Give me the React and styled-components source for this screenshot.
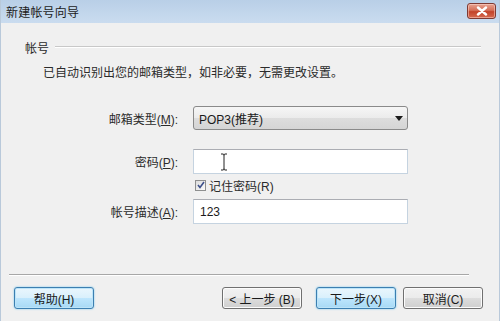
import React from 'react';
import styled, { createGlobalStyle } from 'styled-components';

const GlobalStyle = createGlobalStyle`
  html, body {
    margin: 0;
    padding: 0;
    background: #f0f0f0;
  }
  body {
    font-family: "Liberation Sans", "Noto Sans CJK SC", sans-serif;
    font-size: 12px;
    color: #2b2b2b;
  }
`;

function Wizard() {
  return (
    <Window>
      <TitleBar>
        <Title>新建帐号向导</Title>
        <CloseButton title='关闭'>
          <svg width='12' height='10' viewBox='0 0 12 10'>
            <path d='M2 1.5 L10 8.5 M10 1.5 L2 8.5' stroke='#fff' strokeWidth='2.4' strokeLinecap='round' />
          </svg>
        </CloseButton>
      </TitleBar>

      <Body>
        <GroupHeader>
          <span>帐号</span>
          <GroupLine />
        </GroupHeader>

        <Hint>已自动识别出您的邮箱类型，如非必要，无需更改设置。</Hint>

        <Form>
          <Label>邮箱类型(<u>M</u>):</Label>
          <Select>
            <span>POP3(推荐)</span>
            <svg width='8' height='5' viewBox='0 0 8 5'>
              <path d='M0 0 H8 L4 5 Z' fill='#1a1a1a' />
            </svg>
          </Select>

          <Label $top={19}>密码(<u>P</u>):</Label>
          <TextBox $top={19} $height={25}>
            <Cursor width='8' height='18' viewBox='0 0 8 18'>
              <path d='M1 1 H3 Q4 1 4 2.5 V15.5 Q4 17 3 17 H1 M7 1 H5 Q4 1 4 2.5 M4 15.5 Q4 17 5 17 H7' stroke='#222' strokeWidth='1' fill='none' />
            </Cursor>
          </TextBox>

          <CheckRow>
            <CheckBox>
              <svg width='8' height='8' viewBox='0 0 8 8'>
                <path d='M1 4 L3 6.5 L7 1' stroke='#3c4f8a' strokeWidth='1.6' fill='none' />
              </svg>
            </CheckBox>
            <span>记住密码(R)</span>
          </CheckRow>

          <Label $top={8}>帐号描述(<u>A</u>):</Label>
          <TextBox $top={8} $height={25}>123</TextBox>
        </Form>

        <Separator />

        <ButtonBar>
          <Button $focused>帮助(H)</Button>
          <Spacer />
          <Button>&lt; 上一步 (B)</Button>
          <Button $focused $gap={14}>下一步(X)</Button>
          <Button $gap={7}>取消(C)</Button>
        </ButtonBar>
      </Body>
    </Window>
  );
}

const Window = styled.div`
  width: 500px;
  height: 321px;
  box-sizing: border-box;
  display: flex;
  flex-direction: column;
  background: #f0f0f0;
  border-left: 1px solid #b9c9da;
  border-right: 1px solid #b9c9da;
  overflow: hidden;
`;

const TitleBar = styled.div`
  height: 23px;
  flex-shrink: 0;
  display: flex;
  align-items: center;
  padding: 0 3px 0 5px;
  background: linear-gradient(to bottom, #b9cfe7 0%, #c3d7ec 60%, #cadcef 100%);
`;

const Title = styled.div`
  flex: 1;
  font-size: 12px;
  color: #1c1c1c;
  letter-spacing: 0.2px;
`;

const CloseButton = styled.div`
  width: 29px;
  height: 16px;
  margin-top: -2px;
  display: flex;
  align-items: center;
  justify-content: center;
  border: 1px solid #7e3a33;
  border-radius: 3px;
  box-sizing: border-box;
  background: linear-gradient(to bottom, #e8a493 0%, #d46f58 45%, #c2432a 55%, #d66a4f 100%);
  box-shadow: inset 0 0 0 1px rgba(255, 220, 210, 0.5);
`;

const Body = styled.div`
  flex: 1;
  display: flex;
  flex-direction: column;
  padding-top: 17px;
`;

const GroupHeader = styled.div`
  display: flex;
  align-items: center;
  height: 14px;
  padding: 0 18px 0 24px;
  color: #2b2b2b;
`;

const GroupLine = styled.div`
  flex: 1;
  margin-left: 6px;
  border-top: 1px solid #c8c8c8;
  border-bottom: 1px solid #ffffff;
`;

const Hint = styled.div`
  margin: 12px 0 0 42px;
  line-height: 14px;
`;

const Form = styled.div`
  margin-top: 26px;
  display: grid;
  grid-template-columns: 177px 215px;
  column-gap: 15px;
  align-items: center;
`;

const Label = styled.div`
  text-align: right;
  margin-top: ${(p) => p.$top || 0}px;
  color: #2b2b2b;

  u {
    text-decoration: underline;
  }
`;

const Select = styled.div`
  height: 24px;
  box-sizing: border-box;
  display: flex;
  align-items: center;
  justify-content: space-between;
  padding: 0 4px 0 5px;
  border: 1px solid #8a8a8a;
  border-radius: 3px;
  background: linear-gradient(to bottom, #f6f6f6 0%, #ebebeb 50%, #dddddd 51%, #d5d5d5 100%);
  color: #1a1a1a;
`;

const TextBox = styled.div`
  position: relative;
  height: ${(p) => p.$height}px;
  margin-top: ${(p) => p.$top || 0}px;
  box-sizing: border-box;
  display: flex;
  align-items: center;
  padding: 0 6px;
  background: #ffffff;
  border: 1px solid #c5d3e0;
  border-top-color: #abadb3;
  color: #1a1a1a;
`;

const Cursor = styled.svg`
  position: absolute;
  left: 26px;
  top: 3px;
`;

const CheckRow = styled.div`
  grid-column: 2;
  display: flex;
  align-items: center;
  gap: 3px;
  margin-top: 5px;
  height: 12px;
  padding-left: 2px;
`;

const CheckBox = styled.div`
  width: 11px;
  height: 11px;
  box-sizing: border-box;
  display: flex;
  align-items: center;
  justify-content: center;
  border: 1px solid #8e8f8f;
  background: linear-gradient(to bottom right, #dcdcdc, #fbfbfb);
`;

const Separator = styled.div`
  margin: 50px 30px 0 8px;
  border-top: 1px solid #a7a7a7;
  border-bottom: 1px solid #ffffff;
`;

const ButtonBar = styled.div`
  display: flex;
  align-items: center;
  padding: 11px 16px 0 13px;
`;

const Spacer = styled.div`
  flex: 1;
`;

const Button = styled.div`
  width: 80px;
  height: 22px;
  margin-left: ${(p) => p.$gap || 0}px;
  box-sizing: border-box;
  display: flex;
  align-items: center;
  justify-content: center;
  border-radius: 3px;
  color: #1a1a1a;
  border: 1px solid ${(p) => (p.$focused ? '#3c7fb1' : '#707070')};
  background: ${(p) =>
    p.$focused
      ? 'linear-gradient(to bottom, #eaf6fd 0%, #d9f0fc 50%, #bee6fd 51%, #a7d9f5 100%)'
      : 'linear-gradient(to bottom, #f2f2f2 0%, #ebebeb 50%, #dddddd 51%, #cfcfcf 100%)'};
  box-shadow: ${(p) =>
    p.$focused ? 'inset 0 0 0 1px #bde4f8, 0 0 2px #6fc4ee' : 'inset 0 0 0 1px #fcfcfc'};
`;

export default function App() {
  return (
    <>
      <GlobalStyle />
      <Wizard />
    </>
  );
}
